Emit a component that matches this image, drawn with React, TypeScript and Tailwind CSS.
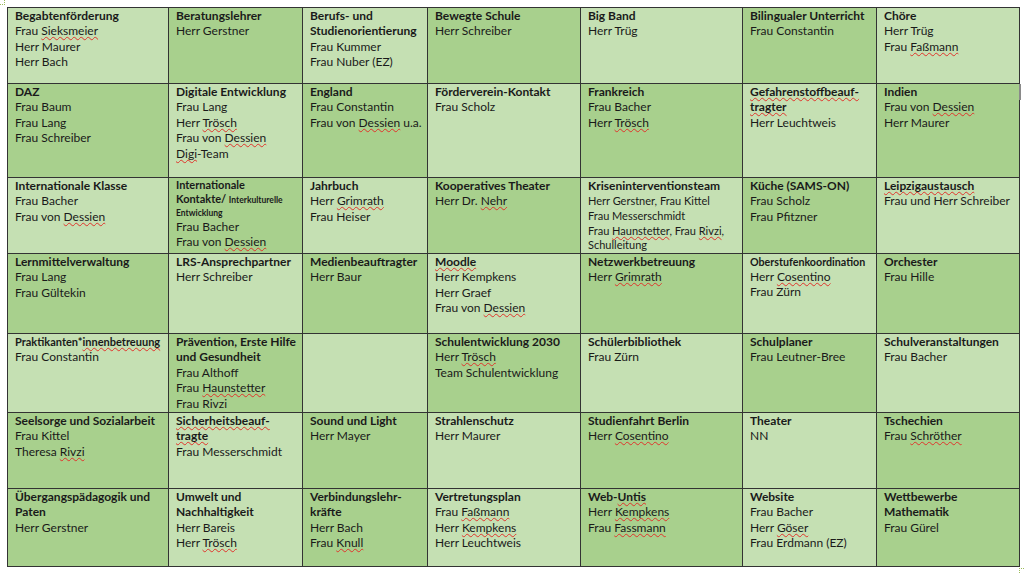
import type { ReactNode } from "react"

// wavy red spell-check underline, like the word processor shows it
function W({ children }: { children: ReactNode }) {
  return (
    <span className="underline decoration-wavy decoration-[#e0332b] decoration-1 underline-offset-[1px] [text-decoration-skip-ink:none]">
      {children}
    </span>
  )
}

type Cell = {
  title?: ReactNode
  lines?: ReactNode[]
  small?: boolean
  dark: boolean
}

const widths = [161, 134, 125, 153, 162, 134, 143]
const heights = [76, 94, 76, 80, 79, 76, 78]

const rows: Cell[][] = [
  [
    { title: "Begabtenförderung", lines: [<>Frau <W>Sieksmeier</W></>, "Herr Maurer", "Herr Bach"], dark: false },
    { title: "Beratungslehrer", lines: ["Herr Gerstner"], dark: true },
    { title: <>Berufs- und<br />Studienorientierung</>, lines: ["Frau Kummer", "Frau Nuber (EZ)"], dark: false },
    { title: "Bewegte Schule", lines: ["Herr Schreiber"], dark: true },
    { title: "Big Band", lines: ["Herr Trüg"], dark: false },
    { title: "Bilingualer Unterricht", lines: ["Frau Constantin"], dark: true },
    { title: "Chöre", lines: ["Herr Trüg", <>Frau <W>Faßmann</W></>], dark: false },
  ],
  [
    { title: "DAZ", lines: ["Frau Baum", "Frau Lang", "Frau Schreiber"], dark: true },
    { title: "Digitale Entwicklung", lines: ["Frau Lang", <>Herr <W>Trösch</W></>, <>Frau von <W>Dessien</W></>, <><W>Digi</W>-Team</>], dark: false },
    { title: "England", lines: ["Frau Constantin", <>Frau von <W>Dessien</W> u.a.</>], dark: true },
    { title: "Förderverein-Kontakt", lines: ["Frau Scholz"], dark: false },
    { title: "Frankreich", lines: ["Frau Bacher", <>Herr <W>Trösch</W></>], dark: true },
    { title: <><W>Gefahrenstoffbeauf-</W><br /><W>tragter</W></>, lines: ["Herr Leuchtweis"], dark: false },
    { title: "Indien", lines: [<>Frau von <W>Dessien</W></>, "Herr Maurer"], dark: true },
  ],
  [
    { title: "Internationale Klasse", lines: ["Frau Bacher", <>Frau von <W>Dessien</W></>], dark: false },
    { title: "intl", lines: ["Frau Bacher", <>Frau von <W>Dessien</W></>], dark: true },
    { title: "Jahrbuch", lines: [<>Herr <W>Grimrath</W></>, "Frau Heiser"], dark: false },
    { title: "Kooperatives Theater", lines: [<>Herr Dr. <W>Nehr</W></>], dark: true },
    { title: "Kriseninterventionsteam", small: true, lines: ["Herr Gerstner, Frau Kittel", "Frau Messerschmidt", <>Frau <W>Haunstetter</W>, Frau <W>Rivzi</W>,</>, "Schulleitung"], dark: false },
    { title: "Küche (SAMS-ON)", lines: ["Frau Scholz", "Frau Pfitzner"], dark: true },
    { title: <W>Leipzigaustausch</W>, lines: ["Frau und Herr Schreiber"], dark: false },
  ],
  [
    { title: "Lernmittelverwaltung", lines: ["Frau Lang", "Frau Gültekin"], dark: true },
    { title: "LRS-Ansprechpartner", lines: ["Herr Schreiber"], dark: false },
    { title: "Medienbeauftragter", lines: ["Herr Baur"], dark: true },
    { title: <W>Moodle</W>, lines: ["Herr Kempkens", "Herr Graef", <>Frau von <W>Dessien</W></>], dark: false },
    { title: "Netzwerkbetreuung", lines: [<>Herr <W>Grimrath</W></>], dark: true },
    { title: "ober", lines: [<>Herr <W>Cosentino</W></>, "Frau Zürn"], dark: false },
    { title: "Orchester", lines: ["Frau Hille"], dark: true },
  ],
  [
    { title: "prakt", lines: ["Frau Constantin"], dark: false },
    { title: <>Prävention, Erste Hilfe<br />und Gesundheit</>, lines: ["Frau Althoff", <>Frau <W>Haunstetter</W></>, "Frau Rivzi"], dark: true },
    { dark: false },
    { title: "Schulentwicklung 2030", lines: [<>Herr <W>Trösch</W></>, "Team Schulentwicklung"], dark: true },
    { title: "Schülerbibliothek", lines: ["Frau Zürn"], dark: false },
    { title: "Schulplaner", lines: ["Frau Leutner-Bree"], dark: true },
    { title: "Schulveranstaltungen", lines: ["Frau Bacher"], dark: false },
  ],
  [
    { title: "Seelsorge und Sozialarbeit", lines: ["Frau Kittel", <>Theresa <W>Rivzi</W></>], dark: true },
    { title: <><W>Sicherheitsbeauf-</W><br /><W>tragte</W></>, lines: ["Frau Messerschmidt"], dark: false },
    { title: "Sound und Light", lines: ["Herr Mayer"], dark: true },
    { title: "Strahlenschutz", lines: ["Herr Maurer"], dark: false },
    { title: "Studienfahrt Berlin", lines: [<>Herr <W>Cosentino</W></>], dark: true },
    { title: "Theater", lines: ["NN"], dark: false },
    { title: "Tschechien", lines: [<>Frau <W>Schröther</W></>], dark: true },
  ],
  [
    { title: <>Übergangspädagogik und<br />Paten</>, lines: ["Herr Gerstner"], dark: true },
    { title: <>Umwelt und<br />Nachhaltigkeit</>, lines: ["Herr Bareis", <>Herr <W>Trösch</W></>], dark: false },
    { title: <>Verbindungslehr-<br />kräfte</>, lines: ["Herr Bach", <>Frau <W>Knull</W></>], dark: true },
    { title: "Vertretungsplan", lines: [<>Frau <W>Faßmann</W></>, <>Herr <W>Kempkens</W></>, "Herr Leuchtweis"], dark: false },
    { title: <>Web-<W>Untis</W></>, lines: [<>Herr <W>Kempkens</W></>, <>Frau <W>Fassmann</W></>], dark: true },
    { title: "Website", lines: ["Frau Bacher", <>Herr <W>Göser</W></>, "Frau Erdmann (EZ)"], dark: false },
    { title: <>Wettbewerbe<br />Mathematik</>, lines: ["Frau Gürel"], dark: true },
  ],
]

function Title({ t }: { t: ReactNode }) {
  if (t === "intl") {
    return (
      <div className="font-bold text-[11px] leading-[13.5px] pb-0">
        Internationale
        <br />
        Kontakte/ <span className="text-[8.5px] leading-none">Interkulturelle</span>
        <br />
        <span className="text-[8.5px] leading-none">Entwicklung</span>
      </div>
    )
  }
  if (t === "ober") {
    return <div className="font-bold text-[10.7px] leading-[15px]">Oberstufenkoordination</div>
  }
  if (t === "prakt") {
    return (
      <div className="font-bold text-[11px] leading-[15px]">
        Praktikanten*<W>innenbetreuung</W>
      </div>
    )
  }
  return <div className="font-bold">{t}</div>
}

export default function App() {
  return (
    <div className="w-[1024px] h-[575px] bg-white relative font-['Lato','Liberation_Sans',sans-serif] text-[12px] leading-[15.4px] text-[#1a1a1a]">
      <div className="pt-[7px] pl-[7px]">
        <table className="border-collapse table-fixed w-[1012px]">
          <colgroup>
            {widths.map((w, i) => (
              <col key={i} style={{ width: w }} />
            ))}
          </colgroup>
          <tbody>
            {rows.map((row, r) => (
              <tr key={r} style={{ height: heights[r] }}>
                {row.map((c, i) => (
                  <td
                    key={i}
                    className={`border border-[#333] align-top pl-[7px] pr-1 pt-0 ${c.dark ? "bg-[#a8d08d]" : "bg-[#c5e0b3]"}`}
                  >
                    {c.title && <Title t={c.title} />}
                    {c.lines && (
                      <div className={c.small ? "text-[11px] leading-[14.6px] pt-[1px]" : ""}>
                        {c.lines.map((l, k) => (
                          <div key={k} className="whitespace-nowrap">{l}</div>
                        ))}
                      </div>
                    )}
                  </td>
                ))}
              </tr>
            ))}
          </tbody>
        </table>
      </div>
      {/* little marker on the right edge */}
      <div className="absolute left-[1019px] top-[84px] w-[2px] h-[16px] bg-[#8a8a8a]" />
      <div className="absolute left-0 top-0 w-[5px] h-[5px] border-r border-b border-dotted border-[#9bbb59]" />
      <div className="absolute left-[1019px] top-[568px] w-[5px] h-[5px] border-l border-t border-dotted border-[#9bbb59]" />
    </div>
  )
}
